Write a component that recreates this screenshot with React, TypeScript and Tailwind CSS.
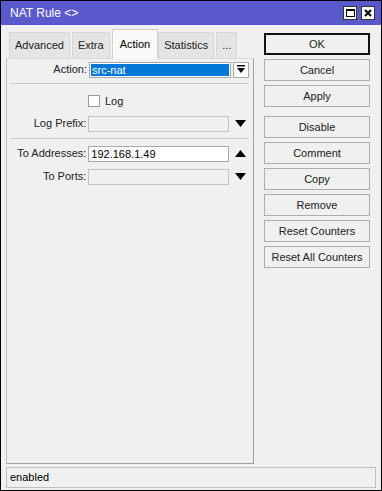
import React from "react";

const font = { fontFamily: '"Liberation Sans", Arial, sans-serif' };

const tabs = ["Advanced", "Extra", "Action", "Statistics", "..."];

const buttons = [
  ["OK", "Cancel", "Apply"],
  ["Disable", "Comment", "Copy", "Remove", "Reset Counters", "Reset All Counters"],
];

function Arrow({ up }: { up?: boolean }) {
  return (
    <svg width="11" height="7" viewBox="0 0 11 7" className="shrink-0">
      <polygon points={up ? "5.5,0 11,7 0,7" : "0,0 11,0 5.5,7"} fill="#000" />
    </svg>
  );
}

function Field({
  label,
  value,
  disabled,
  arrow,
}: {
  label: string;
  value?: string;
  disabled?: boolean;
  arrow?: "up" | "down";
}) {
  return (
    <div className="flex items-center h-[15px]">
      <span className="w-[79px] text-right pr-[2px] text-[#222]">{label}</span>
      <div
        className={`w-[142px] h-[16px] border border-[#a9a9a9] px-[2px] leading-[14px] ${
          disabled ? "bg-[#f0f0f0] border-[#c4c4c4]" : "bg-white"
        }`}
      >
        {value}
      </div>
      <div className="w-[20px] ml-[1px] flex justify-center">
        {arrow && <Arrow up={arrow === "up"} />}
      </div>
    </div>
  );
}

export default function App() {
  return (
    <div
      className="w-[382px] h-[491px] bg-[#f0f0f0] border border-black flex flex-col text-[11px] text-black"
      style={font}
    >
      {/* title bar */}
      <div className="h-[24px] bg-[#5a5acd] flex items-center pl-[9px] pr-[6px] text-white text-[12px]">
        <span className="flex-1">NAT Rule &lt;&gt;</span>
        <div className="flex gap-[4px]">
          <div className="w-[14px] h-[14px] bg-white border border-[#333] flex items-center justify-center">
            <div className="w-[9px] h-[8px] border border-black border-t-2" />
          </div>
          <div className="w-[14px] h-[14px] bg-white border border-[#333] flex items-center justify-center">
            <svg width="8" height="8" viewBox="0 0 8 8">
              <path d="M1 1L7 7M7 1L1 7" stroke="#000" strokeWidth="2" />
            </svg>
          </div>
        </div>
      </div>

      <div className="flex-1 flex px-[5px] pt-[3px]">
        {/* tabs + panel */}
        <div className="w-[248px] flex flex-col">
          <div className="flex pl-[3px] h-[30px] items-end">
            {tabs.map((t) =>
              t === "Action" ? (
                <div
                  key={t}
                  className="h-[30px] px-[7px] bg-[#f9f9f9] border border-b-0 border-[#d0d0d0] flex items-center -mb-px relative z-10"
                >
                  {t}
                </div>
              ) : (
                <div
                  key={t}
                  className="h-[26px] px-[5px] bg-[#e4e4e4] border border-[#d6d6d6] border-b-0 mr-[2px] flex items-center text-[#222]"
                >
                  {t}
                </div>
              )
            )}
          </div>
          <div className="flex-1 border border-[#a0a0a0] border-t-[#dadada] border-l-[#bdbdbd] bg-[#f0f0f0] pt-[2px] px-[3px]">
            <div className="flex items-center h-[17px]">
              <span className="w-[79px] text-right pr-[2px] text-[#222]">Action:</span>
              <div className="w-[142px] h-[16px] border border-[#a9a9a9] bg-white p-px">
                <div className="h-full bg-[#0078d7] text-white pl-[1px] leading-[12px]">src-nat</div>
              </div>
              <div className="ml-[2px] w-[16px] h-[16px] border border-[#a9a9a9] bg-white flex items-center justify-center">
                <svg width="8" height="9" viewBox="0 0 8 9">
                  <rect x="0" y="0" width="8" height="1.5" fill="#000" />
                  <polygon points="0,3 8,3 4,8" fill="#000" />
                </svg>
              </div>
            </div>
            <div className="h-px bg-[#c8c8c8] mt-[5px] mx-[1px]" />
            <div className="flex items-center h-[14px] mt-[10px] pl-[78px] gap-[5px]">
              <div className="w-[12px] h-[12px] border border-[#9a9a9a] bg-white" />
              <span className="text-[#222]">Log</span>
            </div>
            <div className="mt-[8px]">
              <Field label="Log Prefix:" disabled arrow="down" />
            </div>
            <div className="h-px bg-[#c8c8c8] mt-[7px] mx-[1px]" />
            <div className="mt-[7px] flex flex-col gap-[8px]">
              <Field label="To Addresses:" value="192.168.1.49" arrow="up" />
              <Field label="To Ports:" disabled arrow="down" />
            </div>
          </div>
        </div>

        {/* buttons */}
        <div className="ml-[10px] w-[106px] pt-[5px] flex flex-col gap-[9px]">
          {buttons.map((group, gi) => (
            <div key={gi} className="flex flex-col gap-[4px]">
              {group.map((b) => (
                <div
                  key={b}
                  className={`h-[22px] flex items-center justify-center bg-[#f0f0f0] text-[#222] ${
                    b === "OK"
                      ? "border-2 border-[#111]"
                      : "border border-[#adadad]"
                  }`}
                >
                  {b}
                </div>
              ))}
            </div>
          ))}
        </div>
      </div>

      {/* status bar */}
      <div className="h-[26px] px-[5px] pb-[2px] pt-[3px] flex">
        <div className="flex-1 border border-[#c0c0c0] flex items-center pl-[3px]">enabled</div>
      </div>
    </div>
  );
}
